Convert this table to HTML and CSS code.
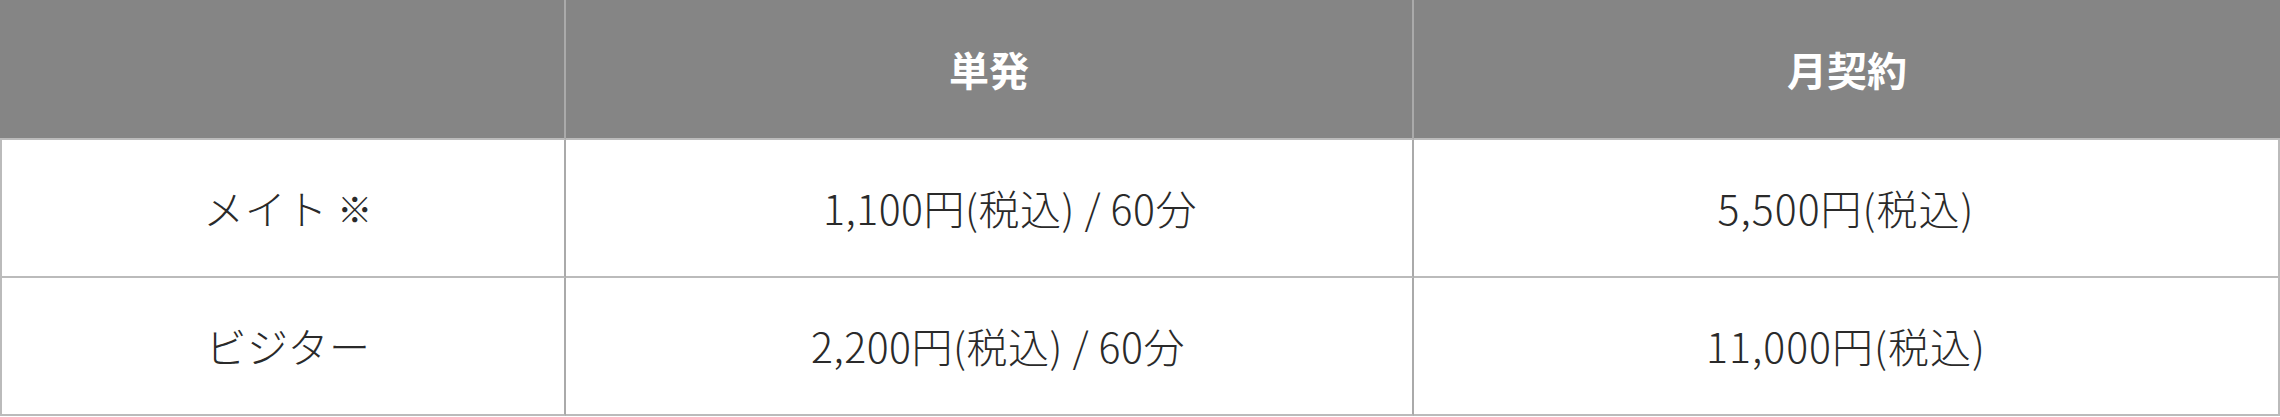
FILE: index.html
```html
<!DOCTYPE html>
<html lang="ja">
<head>
<meta charset="utf-8">
<title>料金表</title>
<link rel="stylesheet" href="styles.css">
</head>
<body>
<div class="price-table">
  <div class="cell head first"></div>
  <div class="cell head">単発</div>
  <div class="cell head last">月契約</div>

  <div class="cell body first">メイト&nbsp;<span class="note">※</span></div>
  <div class="cell body mid shifted">1,100円(税込) / 60分</div>
  <div class="cell body last">5,500円(税込)</div>

  <div class="cell body first">ビジター</div>
  <div class="cell body mid">2,200円(税込) / 60分</div>
  <div class="cell body last">11,000円(税込)</div>
</div>
</body>
</html>
```
FILE: styles.css
```css
html, body {
  margin: 0;
  padding: 0;
  background: #ffffff;
}
body {
  font-family: "Noto Sans CJK JP", "Noto Sans", sans-serif;
}
.price-table {
  display: grid;
  grid-template-columns: 566px 848px 866px;
  grid-template-rows: 140px 138px 138px;
  width: 2280px;
}
.cell {
  box-sizing: border-box;
  display: flex;
  align-items: center;
  justify-content: center;
  font-size: 40px;
  line-height: 1.5;
}
.head {
  background: #858585;
  color: #ffffff;
  font-weight: 700;
  border-bottom: 2px solid #bbbbbb;
  border-right: 2px solid #aaaaaa;
}
.head.last {
  border-right: none;
}
.body {
  color: #2a2a2a;
  font-size: 41px;
  font-weight: 300;
  letter-spacing: 0.5px;
  border-bottom: 2px solid #bbbbbb;
  border-right: 2px solid #aaaaaa;
}
.body.first {
  border-left: 2px solid #bbbbbb;
  padding-left: 10px;
}
.note {
  font-size: 35px;
}
.body.mid {
  padding-left: 18px;
}
.body.mid.shifted {
  padding-left: 42px;
}
.body.last {
  border-right-color: #bbbbbb;
  letter-spacing: 1px;
}
```
